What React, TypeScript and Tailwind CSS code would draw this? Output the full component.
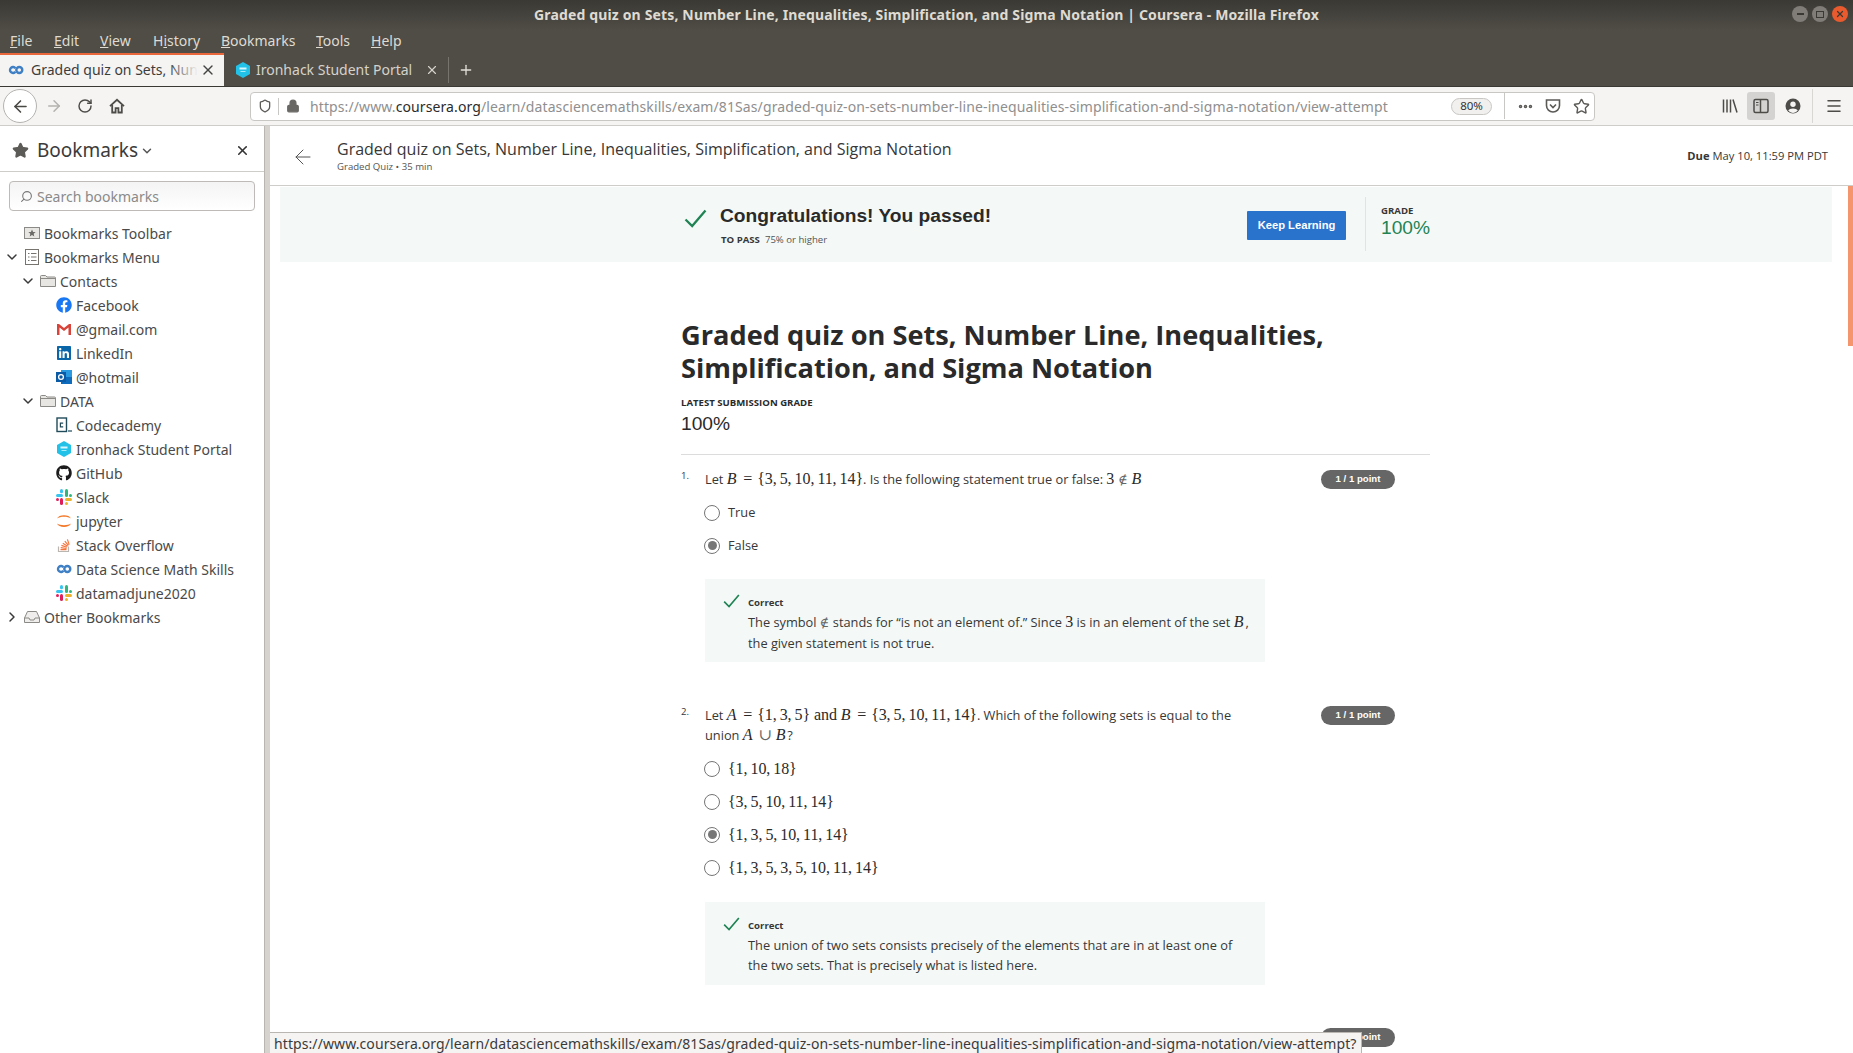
import { ArrowLeft, ArrowRight, ChevronDown, ChevronRight, Ellipsis, Lock, Menu, Plus, RotateCw, Search, Shield, Star, X } from "lucide-react";
import type { ReactNode } from "react";
import { FaFacebook, FaGithub, FaLinkedin } from "react-icons/fa";

const uiFont = "font-['Noto_Sans',sans-serif]";
const pageFont = "font-['Open_Sans',sans-serif]";
const arial = "font-['Liberation_Sans',sans-serif]";
const mathFont = "font-['Liberation_Serif','DejaVu_Serif',serif]";

const CourseraIcon = ({ className = "w-4 h-4" }: { className?: string }) => (
  <svg viewBox="0 0 16 16" className={className} fill="none" stroke="#3f7fc4" strokeWidth="2.4">
    <path d="M7.4 6.2A3 3 0 1 0 7.4 9.8" />
    <circle cx="11.3" cy="8" r="3" />
  </svg>
);

const IronhackIcon = () => (
  <svg viewBox="0 0 16 16" className="w-4 h-4">
    <path d="M8 0 15 4V12L8 16 1 12V4Z" fill="#22c1e8" />
    <rect x="4.5" y="5.5" width="7" height="2" fill="#d8f6fd" />
    <rect x="5.5" y="9" width="5" height="1" fill="#a9ebf9" />
  </svg>
);

const SlackIcon = () => (
  <svg viewBox="0 0 16 16" className="w-4 h-4">
    <rect x="0" y="5" width="7" height="3" rx="1.5" fill="#36c5f0" />
    <rect x="4" y="0" width="3" height="4.2" rx="1.5" fill="#36c5f0" />
    <rect x="9" y="0" width="3" height="8" rx="1.5" fill="#2eb67d" />
    <rect x="13" y="5" width="3" height="3" rx="1.5" fill="#2eb67d" />
    <rect x="9" y="9" width="7" height="3" rx="1.5" fill="#ecb22e" />
    <rect x="9" y="13" width="3" height="3" rx="1.5" fill="#ecb22e" />
    <rect x="4" y="9" width="3" height="7" rx="1.5" fill="#e01e5a" />
    <rect x="0" y="9" width="3" height="3" rx="1.5" fill="#e01e5a" />
  </svg>
);

const GmailIcon = () => (
  <svg viewBox="0 0 16 16" className="w-4 h-4">
    <path d="M1 3H3L8 7 13 3H15V14H12.5V6.5L8 10 3.5 6.5V14H1Z" fill="#d9443a" />
  </svg>
);

const OutlookIcon = () => (
  <svg viewBox="0 0 16 16" className="w-4 h-4">
    <rect x="5" y="1" width="11" height="14" fill="#2a9ae0" />
    <path d="M5 8 16 8V15H5Z" fill="#0f6cbd" />
    <rect x="0" y="3" width="10" height="10" fill="#0a5aa5" />
    <circle cx="5" cy="8" r="2.4" fill="none" stroke="#fff" strokeWidth="1.3" />
  </svg>
);

const CodecademyIcon = () => (
  <svg viewBox="0 0 16 16" className="w-4 h-4">
    <rect x="1" y="1" width="9.5" height="13.5" fill="none" stroke="#204b5a" strokeWidth="1.4" />
    <path d="M7.2 6.2H4.4V9.8H7.2" fill="none" stroke="#204b5a" strokeWidth="1.2" />
    <rect x="12" y="13.4" width="4" height="1.2" fill="#204b5a" />
  </svg>
);

const JupyterIcon = () => (
  <svg viewBox="0 0 16 16" className="w-4 h-4" fill="#f37726">
    <path d="M1 5.5C2.5 1 13.5 1 15 5.5 12 3.2 4 3.2 1 5.5Z" />
    <path d="M1 10.5C2.5 15 13.5 15 15 10.5 12 12.8 4 12.8 1 10.5Z" />
  </svg>
);

const StackIcon = () => (
  <svg viewBox="0 0 16 16" className="w-4 h-4" fill="none">
    <path d="M2.5 9.5V14.5H12.5V9.5" stroke="#b9b6b2" strokeWidth="1.2" />
    <path d="M4.5 12.6H10.5M4.7 10.6 10.6 11.5M5.4 8.4 10.9 10.3M6.8 6.2 11.6 9.3M8.8 4.2 12.4 8.4M11.4 2.4 13.2 7.6" stroke="#f4743b" strokeWidth="1.2" />
  </svg>
);

const FolderIcon = () => (
  <svg viewBox="0 0 16 16" className="w-4 h-4" fill="#e8e6e3" stroke="#8c8a86">
    <path d="M.5 3.5A1 1 0 0 1 1.5 2.5H5.5L7 4H14.5A1 1 0 0 1 15.5 5V13.5H.5Z" />
    <path d="M.5 5.5H15.5" fill="none" />
  </svg>
);

const ToolbarIcon = () => (
  <svg viewBox="0 0 16 16" className="w-4 h-4">
    <rect x=".5" y="2.5" width="15" height="11" fill="#e8e6e3" stroke="#8c8a86" />
    <path d="M8 4.4 9.1 6.9 11.7 7.1 9.7 8.8 10.3 11.4 8 10 5.7 11.4 6.3 8.8 4.3 7.1 6.9 6.9Z" fill="#6d6b68" />
  </svg>
);

const MenuListIcon = () => (
  <svg viewBox="0 0 16 16" className="w-4 h-4" fill="none" stroke="#77746f">
    <rect x="1.5" y=".5" width="13" height="15" />
    <path d="M4 4.5H5.5M7 4.5H12.5M4 8H5.5M7 8H12.5M4 11.5H5.5M7 11.5H12.5" />
  </svg>
);

const OtherIcon = () => (
  <svg viewBox="0 0 16 16" className="w-4 h-4" fill="none" stroke="#8c8a86">
    <path d="M.5 9 3.5 2.5H12.5L15.5 9V13.5H.5Z" fill="#f0eeec" />
    <path d="M.5 9H5L6 11H10L11 9H15.5" />
  </svg>
);

type Row = { depth: number; label: string; icon: ReactNode; open?: boolean; closed?: boolean };

const rows: Row[] = [
  { depth: 0, label: "Bookmarks Toolbar", icon: <ToolbarIcon /> },
  { depth: 0, label: "Bookmarks Menu", icon: <MenuListIcon />, open: true },
  { depth: 1, label: "Contacts", icon: <FolderIcon />, open: true },
  { depth: 2, label: "Facebook", icon: <FaFacebook className="w-4 h-4 text-[#1877f2]" /> },
  { depth: 2, label: "@gmail.com", icon: <GmailIcon /> },
  { depth: 2, label: "LinkedIn", icon: <FaLinkedin className="w-4 h-4 text-[#0a66a8]" /> },
  { depth: 2, label: "@hotmail", icon: <OutlookIcon /> },
  { depth: 1, label: "DATA", icon: <FolderIcon />, open: true },
  { depth: 2, label: "Codecademy", icon: <CodecademyIcon /> },
  { depth: 2, label: "Ironhack Student Portal", icon: <IronhackIcon /> },
  { depth: 2, label: "GitHub", icon: <FaGithub className="w-4 h-4 text-[#1b1b1b]" /> },
  { depth: 2, label: "Slack", icon: <SlackIcon /> },
  { depth: 2, label: "jupyter", icon: <JupyterIcon /> },
  { depth: 2, label: "Stack Overflow", icon: <StackIcon /> },
  { depth: 2, label: "Data Science Math Skills", icon: <CourseraIcon /> },
  { depth: 2, label: "datamadjune2020", icon: <SlackIcon /> },
  { depth: 0, label: "Other Bookmarks", icon: <OtherIcon />, closed: true },
];

const depthPad = ["pl-[24px]", "pl-[40px]", "pl-[56px]"];

const TreeRow = ({ row }: { row: Row }) => (
  <div className={`relative flex h-6 items-center gap-1 ${depthPad[row.depth]}`}>
    {row.open && (
      <ChevronDown className="absolute -ml-[20px] w-4 h-4 text-[#3a3a3a]" strokeWidth={2.2} />
    )}
    {row.closed && (
      <ChevronRight className="absolute -ml-[20px] w-4 h-4 text-[#3a3a3a]" strokeWidth={2.2} />
    )}
    {row.icon}
    <span className="text-[14px] text-[#4a4a4a]">{row.label}</span>
  </div>
);

const Sidebar = () => (
  <aside className={`flex w-[270px] shrink-0 border-r-[5px] border-[#d6d3cf] ${uiFont}`}>
    <div className="w-full border-r border-[#b9b6b2]">
      <div className="flex h-[46px] items-center border-b border-[#cfcdca] pl-[12px] pr-[14px] pt-[4px]">
        <Star className="w-[17px] h-[17px] fill-[#5d5b57] text-[#5d5b57]" />
        <span className="ml-[8px] text-[19px] text-[#3b3b3b]">Bookmarks</span>
        <ChevronDown className="ml-[2px] w-[14px] h-[14px] text-[#555]" strokeWidth={2.5} />
        <X className="ml-auto w-[15px] h-[15px] text-[#333]" strokeWidth={2.5} />
      </div>
      <div className="mx-[9px] mt-[9px] flex h-[30px] items-center rounded-[4px] border border-[#bdbab7] bg-linear-to-b from-[#f4f4f4] to-white pl-[10px]">
        <Search className="w-[13px] h-[13px] -scale-x-100 text-[#777]" />
        <span className="ml-[4px] text-[14px] text-[#8a8a8a]">Search bookmarks</span>
      </div>
      <div className="mt-[10px]">
        {rows.map((r) => (
          <TreeRow key={r.label} row={r} />
        ))}
      </div>
    </div>
  </aside>
);

const TopChrome = () => (
  <div className={`bg-linear-to-b from-[#3a3934] via-[#504d46] via-35% to-[#504d46] ${uiFont}`}>
    <div className="relative flex h-[28px] items-center justify-center pt-[1px]">
      <span className="text-[14px] font-bold tracking-[0.15px] text-[#dfdbd2]">
        Graded quiz on Sets, Number Line, Inequalities, Simplification, and Sigma Notation | Coursera - Mozilla Firefox
      </span>
      <div className="absolute right-[5px] top-[6px] flex gap-[4px]">
        <span className="flex h-[16px] w-[16px] items-center justify-center rounded-full bg-[#807d78] text-[#3a3934]">
          <span className="h-[1.5px] w-[7px] bg-[#3a3934]" />
        </span>
        <span className="flex h-[16px] w-[16px] items-center justify-center rounded-full bg-[#807d78]">
          <span className="h-[7px] w-[8px] border border-[#3a3934]" />
        </span>
        <span className="flex h-[16px] w-[16px] items-center justify-center rounded-full bg-[#e95b2e]">
          <X className="w-[10px] h-[10px] text-[#3a3934]" strokeWidth={3} />
        </span>
      </div>
    </div>
    <div className="flex h-[25px] items-center pl-[10px] text-[14px] text-[#dfdbd2]">
      <span className="w-[44px]"><u>F</u>ile</span>
      <span className="w-[46px]"><u>E</u>dit</span>
      <span className="w-[53px]"><u>V</u>iew</span>
      <span className="w-[68px]">H<u>i</u>story</span>
      <span className="w-[95px]"><u>B</u>ookmarks</span>
      <span className="w-[55px]"><u>T</u>ools</span>
      <span><u>H</u>elp</span>
    </div>
    <div className="flex h-[33px] items-stretch">
      <div className="flex w-[224px] items-center border-t-[2px] border-[#e9673a] bg-[#f5f4f3] pb-[2px] pl-[8px] pr-[8px]">
        <CourseraIcon />
        <span className="relative ml-[7px] w-[164px] whitespace-nowrap text-[14px] text-[#3d3d3d]">
          Graded quiz on Sets, Nun
          <span className="absolute inset-y-0 -right-[3px] w-[30px] bg-linear-to-r from-transparent to-[#f5f4f3]" />
        </span>
        <X className="ml-auto w-[16px] h-[16px] text-[#444]" strokeWidth={2} />
      </div>
      <div className="flex w-[225px] items-center pl-[11px]">
        <IronhackIcon />
        <span className="ml-[5px] whitespace-nowrap text-[14px] text-[#d5d2cb]">Ironhack Student Portal</span>
        <X className="ml-auto mr-[9px] w-[14px] h-[14px] text-[#d5d2cb]" strokeWidth={2} />
        <span className="h-[26px] w-px bg-[#77746d]" />
      </div>
      <div className="flex items-center pl-[9px]">
        <Plus className="w-[16px] h-[16px] text-[#e2dfd9]" strokeWidth={2} />
      </div>
    </div>
  </div>
);

const HomeIcon = () => (
  <svg viewBox="0 0 16 16" className="w-4 h-4" fill="none" stroke="#4e4c49" strokeWidth="1.8">
    <path d="M1 8.2 8 1.8 15 8.2" />
    <path d="M3.2 7V14.5H6.6V10.2H9.4V14.5H12.8V7" />
  </svg>
);

const Library = () => (
  <svg viewBox="0 0 16 16" className="w-4 h-4" fill="none" stroke="#4e4c49" strokeWidth="1.5">
    <path d="M1.5 1.5V14.5M5 1.5V14.5M8.5 1.5V14.5M11 1.5 15 14.5" />
  </svg>
);

const Pocket = () => (
  <svg viewBox="0 0 16 16" className="w-4 h-4" fill="none" stroke="#5c5a57" strokeWidth="1.6">
    <path d="M1.5 2H14.5V7.5A6.5 6.5 0 0 1 1.5 7.5Z" />
    <path d="M5 6.5 8 9.5 11 6.5" />
  </svg>
);

const SidebarToggle = () => (
  <svg viewBox="0 0 16 16" className="w-4 h-4" fill="none" stroke="#4e4c49" strokeWidth="1.5">
    <rect x="1" y="1.5" width="14" height="13" rx="1.5" />
    <path d="M7.5 1.5V14.5" />
    <path d="M3 4.5H5.5M3 7H5.5" strokeWidth="1.2" />
  </svg>
);

const Account = () => (
  <svg viewBox="0 0 16 16" className="w-4 h-4">
    <circle cx="8" cy="8" r="7.5" fill="#4e4c49" />
    <circle cx="8" cy="6.2" r="2.7" fill="#f5f4f3" />
    <path d="M3.2 12.6C4.5 9.8 11.5 9.8 12.8 12.6A6 6 0 0 1 3.2 12.6Z" fill="#f5f4f3" />
  </svg>
);

const Toolbar = () => (
  <div className={`flex h-[40px] items-center border-t border-[#3a3934] border-b border-b-[#cfcdca] bg-[#f5f4f3] ${uiFont}`}>
    <div className="ml-[3px] flex h-[34px] w-[34px] items-center justify-center rounded-full border border-[#b5b3b0] bg-white">
      <ArrowLeft className="w-[19px] h-[19px] text-[#4a4845]" strokeWidth={2} />
    </div>
    <ArrowRight className="ml-[8px] w-[18px] h-[18px] text-[#b4b2af]" strokeWidth={2} />
    <RotateCw className="ml-[14px] w-[16px] h-[16px] text-[#4e4c49]" strokeWidth={2.2} />
    <span className="ml-[16px]"><HomeIcon /></span>
    <div className="ml-[125px] flex h-[29px] w-[1345px] items-center rounded-[4px] border border-[#c9c7c4] bg-white pl-[7px]">
      <Shield className="w-[14px] h-[14px] text-[#5c5a57]" strokeWidth={2.2} />
      <span className="ml-[6px] h-[17px] w-px bg-[#c9c7c4]" />
      <Lock className="ml-[7px] w-[14px] h-[14px] fill-[#6a6865] text-[#6a6865]" strokeWidth={2.2} />
      <span className="ml-[10px] w-[1082px] whitespace-nowrap text-[14px] tracking-[0.1px] text-[#8f8f8f]">
        https://www.<span className="text-[#2b2b2b]">coursera.org</span>/learn/datasciencemathskills/exam/81Sas/graded-quiz-on-sets-number-line-inequalities-simplification-and-sigma-notation/view-attempt
      </span>
      <span className="ml-[59px] flex h-[17px] w-[41px] items-center justify-center rounded-full border border-[#c9c7c4] bg-[#f1f0ee] text-[11.5px] text-[#333]">
        80%
      </span>
      <span className="ml-[12px] h-[26px] w-px bg-[#c9c7c4]" />
      <Ellipsis className="ml-[12px] w-[17px] h-[17px] text-[#5c5a57]" strokeWidth={3} />
      <span className="ml-[11px]"><Pocket /></span>
      <Star className="ml-[12px] w-[17px] h-[17px] text-[#5c5a57]" strokeWidth={2} />
    </div>
    <div className="ml-[127px]"><Library /></div>
    <div className="ml-[9px] flex h-[28px] w-[28px] items-center justify-center rounded-[3px] bg-[#d4d3d1]">
      <SidebarToggle />
    </div>
    <div className="ml-[10px]"><Account /></div>
    <span className="ml-[11px] h-[34px] w-px bg-[#d9d7d4]" />
    <Menu className="ml-[12px] w-[18px] h-[18px] text-[#4e4c49]" strokeWidth={2} />
  </div>
);

const Check = ({ className }: { className: string }) => (
  <svg viewBox="0 0 24 20" className={className} fill="none" stroke="#1f8354" strokeWidth="2.4">
    <path d="M1.5 11 8.5 18 22.5 1.5" />
  </svg>
);

const M = ({ children }: { children: ReactNode }) => (
  <span className={`${mathFont} text-[16px] tracking-[-0.1px] text-[#2a2a2a]`}>{children}</span>
);
const V = ({ children }: { children: ReactNode }) => <i className="pr-[2px]">{children}</i>;
const Eq = () => <span className="mx-[1px]">=</span>;

const Radio = ({ checked, label }: { checked?: boolean; label: ReactNode }) => (
  <div className="flex h-[33px] items-center">
    <span className="-ml-px flex h-[16px] w-[16px] items-center justify-center rounded-full border-[1.5px] border-[#757575] bg-white">
      {checked && <span className="h-[9px] w-[9px] rounded-full bg-[#777]" />}
    </span>
    <span className="ml-[8px] text-[12.8px] text-[#373737]">{label}</span>
  </div>
);

const Pill = () => (
  <span className={`flex h-[19px] w-[74px] items-center justify-center rounded-full bg-[#666] text-[9.6px] font-bold text-white ${arial}`}>
    1 / 1 point
  </span>
);

const Feedback = ({ children }: { children: ReactNode }) => (
  <div className="flex h-[83px] w-[560px] bg-[#f4f9f7] pl-[18px] pt-[14px]">
    <Check className="mt-[1px] h-[14px] w-[17px] shrink-0" />
    <div className="ml-[8px]">
      <div className="text-[9.6px] font-bold leading-[19px] text-[#373737]">Correct</div>
      <div className="text-[12.8px] leading-[20px] text-[#373737]">{children}</div>
    </div>
  </div>
);

const Question = ({ n, prompt, children }: { n: number; prompt: ReactNode; children: ReactNode }) => (
  <div className="flex">
    <span className="w-[24px] shrink-0 text-[9.6px] leading-[14px] text-[#373737]">{n}.</span>
    <div className="w-[560px]">
      <div className="text-[12.8px] leading-[20px] text-[#373737]">{prompt}</div>
      {children}
    </div>
    <div className="ml-[56px] mt-[1px]"><Pill /></div>
  </div>
);

const notIn = <span className="font-['DejaVu_Serif',serif] text-[13px] text-[#666]">∉</span>;

const Page = () => (
  <main className={`relative flex flex-1 flex-col overflow-hidden bg-white ${pageFont}`}>
    <div className="flex h-[60px] shrink-0 items-center border-b border-[#cfcdca]">
      <ArrowLeft className="ml-[21px] mt-[2px] h-[24px] w-[24px] text-[#555]" strokeWidth={1} />
      <div className="ml-[22px]">
        <div className="text-[16px] leading-[22px] text-[#373737]">
          Graded quiz on Sets, Number Line, Inequalities, Simplification, and Sigma Notation
        </div>
        <div className="text-[9.6px] leading-[13px] text-[#555]">Graded Quiz • 35 min</div>
      </div>
      <div className="ml-auto mr-[25px] mt-[2px] text-[11.2px] text-[#373737]">
        <b>Due</b> May 10, 11:59 PM PDT
      </div>
    </div>
    <div className="ml-[10px] mr-[21px] mt-[1px] flex h-[75px] shrink-0 bg-[#f4f9f7] pl-[404px]">
      <Check className="mt-[22px] h-[19px] w-[23px]" />
      <div className="ml-[13px] w-[527px]">
        <div className={`mt-[16px] text-[19.2px] font-bold leading-[26px] text-[#2a2a2a] ${arial}`}>
          Congratulations! You passed!
        </div>
        <div className="mt-[4px] pl-[1px] text-[9.6px] leading-[14px] text-[#555]">
          <b className="text-[#373737]">TO PASS</b>&nbsp; 75% or higher
        </div>
      </div>
      <div className={`mt-[24px] flex h-[29px] w-[99px] items-center justify-center rounded-[1px] bg-[#2a73cc] text-[11.2px] font-bold text-white ${arial}`}>
        Keep Learning
      </div>
      <span className="ml-[19px] mt-[10px] h-[54px] w-px bg-[#dfe5e3]" />
      <div className="ml-[15px] mt-[18px]">
        <div className="text-[9.6px] font-bold leading-[12px] text-[#373737]">GRADE</div>
        <div className={`text-[19.2px] leading-[22px] text-[#1f8354] ${arial}`}>100%</div>
      </div>
    </div>
    <div className="ml-[411px] w-[749px]">
      <h1 className="mt-[56px] text-[27.2px] font-bold leading-[33px] text-[#2a2a2a]">
        Graded quiz on Sets, Number Line, Inequalities, Simplification, and Sigma Notation
      </h1>
      <div className="mt-[12px] text-[9.6px] font-bold leading-[14px] text-[#2a2a2a]">LATEST SUBMISSION GRADE</div>
      <div className={`mt-[1px] text-[19.2px] leading-[26px] text-[#2a2a2a] ${arial}`}>100%</div>
      <div className="mb-[14px] mt-[17px] h-px bg-[#dcdcdc]" />
      <Question
        n={1}
        prompt={
          <>
            Let <M><V>B</V> <Eq /> {"{3,\u20095,\u200910,\u200911,\u200914}"}</M>. Is the following statement true or false: <M>3 {notIn} <V>B</V></M>
          </>
        }
      >
        <div className="mt-[6px]">
          <Radio label="True" />
          <Radio checked label="False" />
        </div>
        <div className="mt-[17px]">
          <Feedback>
            The symbol {notIn} stands for “is not an element of.” Since <M>3</M> is in an element of the set <M><V>B</V></M>,
            <br />
            the given statement is not true.
          </Feedback>
        </div>
      </Question>
      <div className="mt-[43px]">
        <Question
          n={2}
          prompt={
            <>
              Let <M><V>A</V> <Eq /> {"{1,\u20093,\u20095}"} and <V>B</V> <Eq /> {"{3,\u20095,\u200910,\u200911,\u200914}"}</M>. Which of the following sets is equal to the
              <br />
              union <M><V>A</V> <span className="text-[#666]">∪</span> <V>B</V></M>?
            </>
          }
        >
          <div className="mt-[7px]">
            <Radio label={<M>{"{1,\u200910,\u200918}"}</M>} />
            <Radio label={<M>{"{3,\u20095,\u200910,\u200911,\u200914}"}</M>} />
            <Radio checked label={<M>{"{1,\u20093,\u20095,\u200910,\u200911,\u200914}"}</M>} />
            <Radio label={<M>{"{1,\u20093,\u20095,\u20093,\u20095,\u200910,\u200911,\u200914}"}</M>} />
          </div>
          <div className="mt-[18px]">
            <Feedback>
              The union of two sets consists precisely of the elements that are in at least one of
              <br />
              the two sets. That is precisely what is listed here.
            </Feedback>
          </div>
        </Question>
      </div>
      <div className="ml-[640px] mt-[43px]"><Pill /></div>
    </div>
    {/* status tooltip and scrollbar sit over the page */}
    <div className={`absolute bottom-0 left-0 flex h-[21px] items-center border-r border-t border-[#b9b6b2] bg-[#f5f4f3] pl-[4px] pr-[5px] text-[14px] tracking-[0.09px] text-[#3a3a3a] whitespace-nowrap ${uiFont}`}>
      https://www.coursera.org/learn/datasciencemathskills/exam/81Sas/graded-quiz-on-sets-number-line-inequalities-simplification-and-sigma-notation/view-attempt?
    </div>
    <div className="absolute right-0 top-[60px] h-[160px] w-[5px] bg-[#f4956d]" />
  </main>
);

export default function App() {
  return (
    <div className="flex h-[1053px] w-[1853px] flex-col overflow-hidden bg-white">
      <TopChrome />
      <Toolbar />
      <div className="flex min-h-0 flex-1">
        <Sidebar />
        <Page />
      </div>
    </div>
  );
}
